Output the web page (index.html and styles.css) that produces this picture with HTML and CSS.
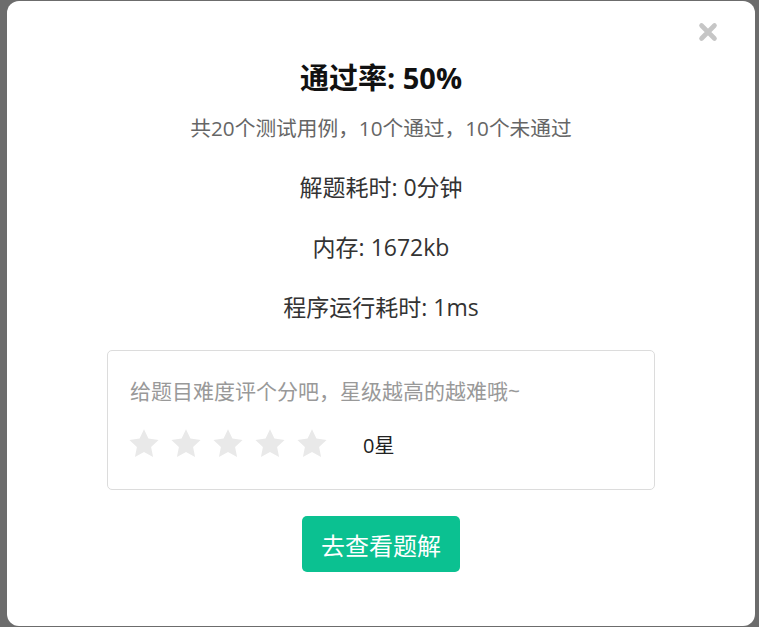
FILE: index.html
```html
<!DOCTYPE html>
<html lang="zh-CN">
<head>
<meta charset="utf-8">
<title>通过率</title>
<link rel="stylesheet" href="styles.css">
</head>
<body>
<div class="overlay">
  <div class="modal">
    <button class="close" aria-label="关闭">
      <svg width="20" height="20" viewBox="0 0 20 20"><path d="M3.5 3.5 L16.5 16.5 M16.5 3.5 L3.5 16.5" stroke="#c6c6c6" stroke-width="4.6" stroke-linecap="round"/></svg>
    </button>
    <h1 class="title">通过率: 50%</h1>
    <p class="sub">共20个测试用例，10个通过，10个未通过</p>
    <p class="stat">解题耗时: 0分钟</p>
    <p class="stat">内存: 1672kb</p>
    <p class="stat">程序运行耗时: 1ms</p>
    <div class="rate">
      <p class="rate-tip">给题目难度评个分吧，星级越高的越难哦~</p>
      <div class="rate-row">
        <div class="stars">
          <svg class="star" viewBox="0 0 24 24"><path d="M12 1.6l3.1 6.6 7.2.9-5.3 5 1.4 7.1L12 17.7l-6.4 3.5L7 14.1 1.7 9.1l7.2-.9z"/></svg>
          <svg class="star" viewBox="0 0 24 24"><path d="M12 1.6l3.1 6.6 7.2.9-5.3 5 1.4 7.1L12 17.7l-6.4 3.5L7 14.1 1.7 9.1l7.2-.9z"/></svg>
          <svg class="star" viewBox="0 0 24 24"><path d="M12 1.6l3.1 6.6 7.2.9-5.3 5 1.4 7.1L12 17.7l-6.4 3.5L7 14.1 1.7 9.1l7.2-.9z"/></svg>
          <svg class="star" viewBox="0 0 24 24"><path d="M12 1.6l3.1 6.6 7.2.9-5.3 5 1.4 7.1L12 17.7l-6.4 3.5L7 14.1 1.7 9.1l7.2-.9z"/></svg>
          <svg class="star" viewBox="0 0 24 24"><path d="M12 1.6l3.1 6.6 7.2.9-5.3 5 1.4 7.1L12 17.7l-6.4 3.5L7 14.1 1.7 9.1l7.2-.9z"/></svg>
        </div>
        <span class="rate-text">0星</span>
      </div>
    </div>
    <div class="actions">
      <button class="btn">去查看题解</button>
    </div>
  </div>
</div>
</body>
</html>
```

FILE: styles.css
```css
* { box-sizing: border-box; }
html, body {
  margin: 0;
  padding: 0;
  background: #6c6c6c;
  font-family: "Open Sans", "Noto Sans CJK SC", sans-serif;
}
.overlay {
  width: 759px;
  height: 627px;
  padding: 1px 4px 1px 7px;
}
.modal {
  position: relative;
  width: 748px;
  height: 625px;
  background: #fff;
  border-radius: 12px;
  padding-top: 57px;
  text-align: center;
  color: #333;
}
.close {
  position: absolute;
  top: 21px;
  right: 37px;
  width: 20px;
  height: 20px;
  padding: 0;
  border: 0;
  background: none;
  display: flex;
}
.title {
  margin: 0;
  font-size: 29px;
  line-height: 40px;
  font-weight: 700;
  color: #111;
}
.sub {
  margin: 15px 0 0;
  font-size: 20.7px;
  line-height: 30px;
  color: #666;
}
.stat {
  margin: 30px 0 0;
  font-size: 23px;
  line-height: 30px;
  color: #333;
}
.sub + .stat { margin-top: 29px; }
.rate {
  margin: 28px 100px 0;
  border: 1px solid #dcdcdc;
  border-radius: 5px;
  padding: 25px 22px 30px;
  text-align: left;
}
.rate-tip {
  margin: 0;
  font-size: 21px;
  line-height: 30px;
  color: #999;
}
.rate-row {
  margin-top: 23px;
  display: flex;
  align-items: center;
  height: 30px;
}
.stars {
  display: flex;
  gap: 8px;
  margin-left: -3px;
}
.star {
  width: 34px;
  height: 34px;
  fill: #e9e9e9;
}
.rate-text {
  margin-left: 34px;
  font-size: 20px;
  color: #222;
}
.actions {
  margin-top: 26px;
  display: flex;
  justify-content: center;
}
.btn {
  width: 158px;
  height: 56px;
  border: 0;
  border-radius: 5px;
  background: #0bc191;
  color: #fff;
  font-family: "Open Sans", "Noto Sans CJK SC", sans-serif;
  font-size: 24px;
  padding: 0;
}
```
